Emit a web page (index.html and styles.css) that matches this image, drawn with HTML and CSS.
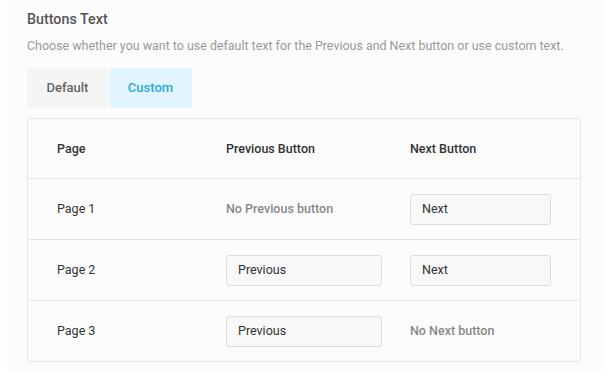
FILE: index.html
```html
<!DOCTYPE html>
<html lang="en">
<head>
    <meta charset="UTF-8">
    <meta name="viewport" content="width=device-width, initial-scale=1.0">
    <title>Buttons Text</title>
    <link rel="stylesheet" href="styles.css">
</head>
<body>
    <div class="panel">
        <h2 class="title">Buttons Text</h2>
        <p class="desc">Choose whether you want to use default text for the Previous and Next button or use custom text.</p>

        <div class="toggle">
            <button class="toggle-btn">Default</button>
            <button class="toggle-btn active">Custom</button>
        </div>

        <div class="table">
            <div class="row head">
                <div>Page</div>
                <div>Previous Button</div>
                <div>Next Button</div>
            </div>
            <div class="row">
                <div>Page 1</div>
                <div class="none">No Previous button</div>
                <div><input class="field wide" type="text" value="Next"></div>
            </div>
            <div class="row">
                <div>Page 2</div>
                <div><input class="field" type="text" value="Previous"></div>
                <div><input class="field wide" type="text" value="Next"></div>
            </div>
            <div class="row">
                <div>Page 3</div>
                <div><input class="field" type="text" value="Previous"></div>
                <div class="none">No Next button</div>
            </div>
        </div>
    </div>
</body>
</html>
```

FILE: styles.css
```css
body {
    margin: 0;
    background: #ffffff;
    font-family: Roboto, "Liberation Sans", sans-serif;
    color: #333333;
}
.panel {
    margin-left: 7px;
    width: 596px;
    height: 372px;
    box-sizing: border-box;
    padding: 9px 22px 0 20px;
    background: #fcfcfc;
}
.title {
    margin: 0;
    font-size: 14.3px;
    line-height: 20px;
    font-weight: 500;
    color: #555555;
}
.desc {
    margin: 7px 0 0;
    font-size: 12.45px;
    line-height: 20px;
    color: #999999;
}
.toggle {
    display: inline-flex;
    margin-top: 12px;
    border-radius: 4px;
    overflow: hidden;
}
.toggle-btn {
    width: 81px;
    height: 40px;
    box-sizing: border-box;
    padding: 0 0 1px;
    border: none;
    background: #f5f5f5;
    font-family: inherit;
    font-size: 13px;
    font-weight: 500;
    color: #666666;
}
.toggle-btn.active {
    width: 84px;
    background: #e1f5fe;
    color: #29a9e0;
    border-left: 1px solid #fcfcfc;
}
.table {
    margin-top: 10px;
    border: 1px solid #e4e4e4;
    border-radius: 4px;
    background: #fcfcfc;
}
.row {
    display: grid;
    grid-template-columns: 169px 184px 1fr;
    align-items: center;
    height: 60px;
    box-sizing: border-box;
    padding: 0 30px 1px 29px;
    font-size: 12.5px;
    color: #333333;
    border-top: 1px solid #e4e4e4;
}
.row.head {
    height: 59px;
    border-top: none;
    font-weight: 500;
}
.row + .row {
    height: 61px;
}
.none {
    color: #888888;
    font-weight: 500;
}
.field {
    display: block;
    width: 156px;
    height: 31px;
    margin-top: 2px;
    box-sizing: border-box;
    padding: 0 11px 2px;
    border: 1px solid #dddddd;
    border-radius: 3px;
    background: #f8f8f8;
    font-family: inherit;
    font-size: 12.5px;
    color: #333333;
}
.field.wide {
    width: 141px;
}
```
